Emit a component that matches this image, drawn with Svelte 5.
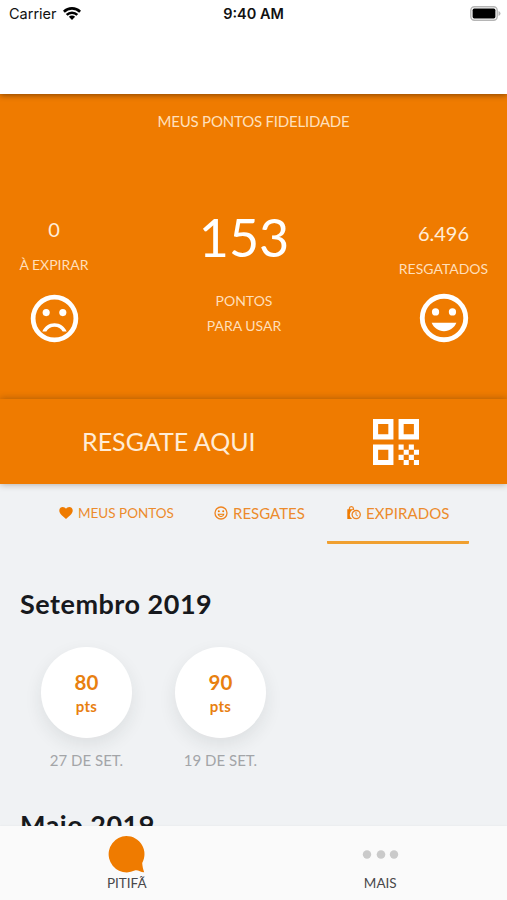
<!-- App.svelte -->
<script>
    const tabs = [
        { id: 'pontos', label: 'MEUS PONTOS', icon: 'heart' },
        { id: 'resgates', label: 'RESGATES', icon: 'smile' },
        { id: 'expirados', label: 'EXPIRADOS', icon: 'bag' }
    ];

    const months = [
        {
            title: 'Setembro 2019',
            items: [
                { points: 80, date: '27 DE SET.' },
                { points: 90, date: '19 DE SET.' }
            ]
        },
        { title: 'Maio 2019', items: [] }
    ];

    let active = $state('expirados');
</script>

<div class="app">
    <header class="header">
        <div class="status">
            <div class="carrier">
                <span>Carrier</span>
                <svg class="wifi" viewBox="0 0 18 13">
                    <path d="M.9 4.700a11.600 11.600 0 0 1 16.200 0M3.700 7.900a7.600 7.600 0 0 1 10.600 0" />
                    <path class="fill" d="M9 13l3.100-3.200a4.400 4.400 0 0 0-6.200 0z" />
                </svg>
            </div>
            <span class="time">9:40 AM</span>
            <svg class="battery" viewBox="0 0 31 15">
                <rect x="0.8" y="0.8" width="26.4" height="13.4" rx="3.6" fill="#fff" stroke="#b5b5b5" stroke-width="1.4" />
                <rect x="2.6" y="2.6" width="22.8" height="9.8" rx="1.6" fill="#000" />
                <path d="M28.5 5q2 .6 2 2.5t-2 2.5z" fill="#b5b5b5" />
            </svg>
        </div>
    </header>

    <section class="points">
        <h1>MEUS PONTOS FIDELIDADE</h1>
        <div class="summary">
            <div class="side">
                <span class="number">0</span>
                <span class="label">À EXPIRAR</span>
                <svg class="face" viewBox="0 0 24 24">
                    <circle class="ring" cx="12" cy="12" r="9" />
                    <circle cx="8.5" cy="9.5" r="1.5" />
                    <circle cx="15.5" cy="9.5" r="1.5" />
                    <path d="M12 14c-2.33 0-4.32 1.45-5.12 3.5h1.67c.69-1.19 1.97-2 3.45-2s2.75.81 3.45 2h1.67c-.8-2.05-2.79-3.5-5.12-3.5z" />
                </svg>
            </div>
            <div class="total">
                <span class="big">153</span>
                <span class="label">PONTOS<br />PARA USAR</span>
            </div>
            <div class="side right">
                <span class="number">6.496</span>
                <span class="label">RESGATADOS</span>
                <svg class="face" viewBox="0 0 24 24">
                    <circle class="ring" cx="12" cy="12" r="9" />
                    <circle cx="8.5" cy="9.5" r="1.5" />
                    <circle cx="15.5" cy="9.5" r="1.5" />
                    <path d="M12 17.5c2.33 0 4.3-1.46 5.11-3.5H6.89c.8 2.04 2.78 3.5 5.11 3.5z" />
                </svg>
            </div>
        </div>
    </section>

    <button class="redeem">
        <span>RESGATE AQUI</span>
        <svg class="qr" viewBox="3 3 18 18">
            <path fill-rule="evenodd" d="M3 3h8v8H3zM5 5v4h4V5zM13 3h8v8h-8zM15 5v4h4V5zM3 13h8v8H3zM5 15v4h4v-4z" />
            <path d="M13 13h2v2h-2zM17 13h2v2h-2zM15 15h2v2h-2zM19 15h2v2h-2zM13 17h2v2h-2zM17 17h2v2h-2zM15 19h2v2h-2zM19 19h2v2h-2z" />
        </svg>
    </button>

    <main class="content">
        <nav class="tabs">
            {#each tabs as tab}
                <button class="tab {tab.id}" class:active={active === tab.id} onclick={() => (active = tab.id)}>
                    <svg viewBox="0 0 14 14">
                        {#if tab.icon === 'heart'}
                            <path d="M7 13C2.2 9 .3 7.1.3 4.5.3 2.4 1.8 1 3.7 1 5 1 6.3 1.7 7 2.8 7.7 1.7 9 1 10.3 1c1.9 0 3.4 1.4 3.4 3.5C13.7 7.1 11.8 9 7 13z" />
                        {:else if tab.icon === 'smile'}
                            <circle class="line" cx="7" cy="7" r="6" />
                            <circle cx="4.8" cy="5.3" r="1" />
                            <circle cx="9.2" cy="5.3" r="1" />
                            <path fill-rule="evenodd" d="M3.5 7.800h7c-.4 2-1.800 3.200-3.500 3.200s-3.100-1.200-3.500-3.200zm1.400 1c.5.800 1.200 1.200 2.100 1.200s1.600-.4 2.100-1.200z" />
                        {:else}
                            <path class="line" d="M2.400 4V2.800a2 2 0 0 1 4-.2V4" />
                            <path d="M.3 3.300h7.900A5.300 5.300 0 0 0 5.200 13H.3z" />
                            <circle class="line" cx="9.200" cy="8.600" r="4.100" />
                            <path class="line thin" d="M9 6v2.800l1.900 1.200" />
                        {/if}
                    </svg>
                    <span>{tab.label}</span>
                </button>
            {/each}
        </nav>

        {#each months as month}
            <section class="month">
                <h2>{month.title}</h2>
                <div class="items">
                    {#each month.items as item}
                        <div class="item">
                            <div class="bubble">
                                <strong>{item.points}</strong>
                                <small>pts</small>
                            </div>
                            <span class="date">{item.date}</span>
                        </div>
                    {/each}
                </div>
            </section>
        {/each}
    </main>

    <footer class="bottom">
        <button class="link">
            <svg class="logo" viewBox="0 0 37 37">
                <path d="M18.3 0a18.200 18.200 0 0 1 15.900 27c.2 3.200.9 6.200 2 9.300-3.600.2-6.300-2.800-9.500-1.700A18.200 18.200 0 1 1 18.300 0z" />
            </svg>
            <span>PITIFÃ</span>
        </button>
        <button class="link">
            <svg class="dots" viewBox="0 0 37 37">
                <circle cx="5" cy="18.5" r="4.2" />
                <circle cx="19" cy="18.5" r="4.3" />
                <circle cx="32" cy="18.5" r="4.2" />
            </svg>
            <span>MAIS</span>
        </button>
    </footer>
</div>

<style>
    :global(body) {
        margin: 0;
        overflow: hidden;
    }
    .app {
        height: 900px;
        display: flex;
        flex-direction: column;
        background: #f0f2f4;
        font-family: Lato, "Open Sans", sans-serif;
        overflow: hidden;
    }
    button {
        font: inherit;
        border: 0;
        padding: 0;
        background: none;
    }
    h1, h2 {
        margin: 0;
    }
    .header {
        flex: 0 0 94px;
        background: #fff;
        box-shadow: 0 1px 6px rgba(0, 0, 0, 0.45);
        z-index: 1;
    }
    .status {
        display: grid;
        grid-template-columns: 1fr 1fr 1fr;
        align-items: center;
        height: 27px;
        padding: 0 6px 0 9px;
        font-family: Inter, sans-serif;
        font-size: 14.5px;
        color: #111;
    }
    .carrier {
        display: flex;
        align-items: center;
        gap: 6px;
    }
    .wifi {
        width: 18px;
        height: 13px;
        margin-top: -1px;
        fill: none;
        stroke: #000;
        stroke-width: 2.6;
    }
    .wifi .fill {
        fill: #000;
        stroke: none;
    }
    .time {
        padding-right: 3px;
        text-align: center;
        font-weight: 600;
    }
    .battery {
        width: 31px;
        height: 15px;
        justify-self: end;
    }
    .points {
        flex: 0 0 305px;
        background: #ef7b00;
        color: #ffedd8;
        text-align: center;
    }
    .points h1 {
        padding-top: 17px;
        font-size: 15px;
        line-height: 20px;
        font-weight: 400;
        letter-spacing: -0.2px;
        color: #ffe0bd;
    }
    .summary {
        display: grid;
        grid-template-columns: 108px 272px 127px;
        margin-top: 76px;
    }
    .side, .total {
        display: flex;
        flex-direction: column;
        align-items: center;
    }
    .number {
        margin-top: 10px;
        font-size: 20px;
        line-height: 24px;
    }
    .label {
        font-size: 14px;
        line-height: 25px;
        color: #ffdfba;
    }
    .side .label {
        margin-top: 11px;
    }
    .face {
        width: 57px;
        height: 57px;
        margin-top: 13px;
        fill: #fff;
    }
    .ring {
        fill: none;
        stroke: #fff;
        stroke-width: 2;
    }
    .right .number {
        margin-top: 14px;
    }
    .right .face {
        margin-top: 8px;
        width: 58px;
        height: 58px;
    }
    .big {
        font-size: 52px;
        line-height: 60px;
        color: #fff;
    }
    .total .label {
        margin-top: 21px;
    }
    .redeem {
        flex: 0 0 85px;
        display: flex;
        align-items: center;
        justify-content: space-between;
        padding: 0 88px 0 82px;
        background: #ef7b00;
        color: #ffecd6;
        font-size: 25px;
        box-shadow: 0 0 7px rgba(60, 40, 20, 0.4);
        z-index: 1;
    }
    .redeem span {
        padding-bottom: 2px;
    }
    .qr {
        width: 46px;
        height: 46px;
        fill: #fff;
    }
    .content {
        flex: 1;
        min-height: 0;
        overflow: hidden;
    }
    .tabs {
        display: flex;
        height: 60px;
        padding-left: 39px;
    }
    .tab {
        display: flex;
        align-items: flex-start;
        justify-content: flex-start;
        gap: 5px;
        height: 60px;
        padding: 19px 0 0 20px;
        box-sizing: border-box;
        font-size: 15px;
        line-height: 20px;
        color: #ec8b2c;
        white-space: nowrap;
    }
    .tab.pontos {
        width: 155px;
        font-size: 13.5px;
    }
    .tab.resgates {
        width: 133px;
    }
    .tab.expirados {
        width: 142px;
        letter-spacing: 0.1px;
    }
    .tab.active {
        background: linear-gradient(#f0a030, #f0a030) bottom / 100% 3px no-repeat;
        border-radius: 1px;
    }
    .tab svg {
        flex: none;
        width: 14px;
        height: 14px;
        margin-top: 3px;
        fill: #ef7b00;
    }
    .tab .line {
        fill: none;
        stroke: #ef8420;
        stroke-width: 1.3;
    }
    .tab .thin {
        stroke-width: 1;
    }
    .month h2 {
        margin: 42px 0 0 20px;
        font-size: 27px;
        line-height: 36px;
        font-weight: 700;
        letter-spacing: 0.5px;
        color: #17191d;
    }
    .items {
        display: flex;
        gap: 43px;
        height: 143px;
        padding: 25px 0 0 41px;
        box-sizing: border-box;
    }
    .item {
        width: 91px;
        display: flex;
        flex-direction: column;
        align-items: center;
    }
    .bubble {
        flex: none;
        width: 91px;
        height: 91px;
        display: flex;
        flex-direction: column;
        align-items: center;
        padding-top: 22px;
        box-sizing: border-box;
        border-radius: 50%;
        background: #fff;
        color: #e8800f;
        box-shadow: 0 7px 18px rgba(30, 40, 40, 0.09);
    }
    .bubble strong {
        font-size: 20.5px;
        line-height: 27px;
    }
    .bubble small {
        font-size: 15px;
        line-height: 20px;
        font-weight: 700;
        letter-spacing: 0.3px;
    }
    .date {
        margin-top: 12px;
        font-size: 15px;
        line-height: 20px;
        color: #a3a5a8;
        white-space: nowrap;
    }
    .bottom {
        flex: 0 0 74px;
        display: flex;
        background: #fafafa;
        box-shadow: 0 0 2px rgba(0, 0, 0, 0.06);
        z-index: 1;
    }
    .link {
        flex: 1;
        display: flex;
        flex-direction: column;
        align-items: center;
        padding-top: 10px;
        font-size: 13.5px;
        line-height: 20px;
        color: #48484a;
    }
    .link svg {
        width: 37px;
        height: 37px;
        fill: #ef7b00;
    }
    .link .dots {
        fill: #cacaca;
    }
</style>
